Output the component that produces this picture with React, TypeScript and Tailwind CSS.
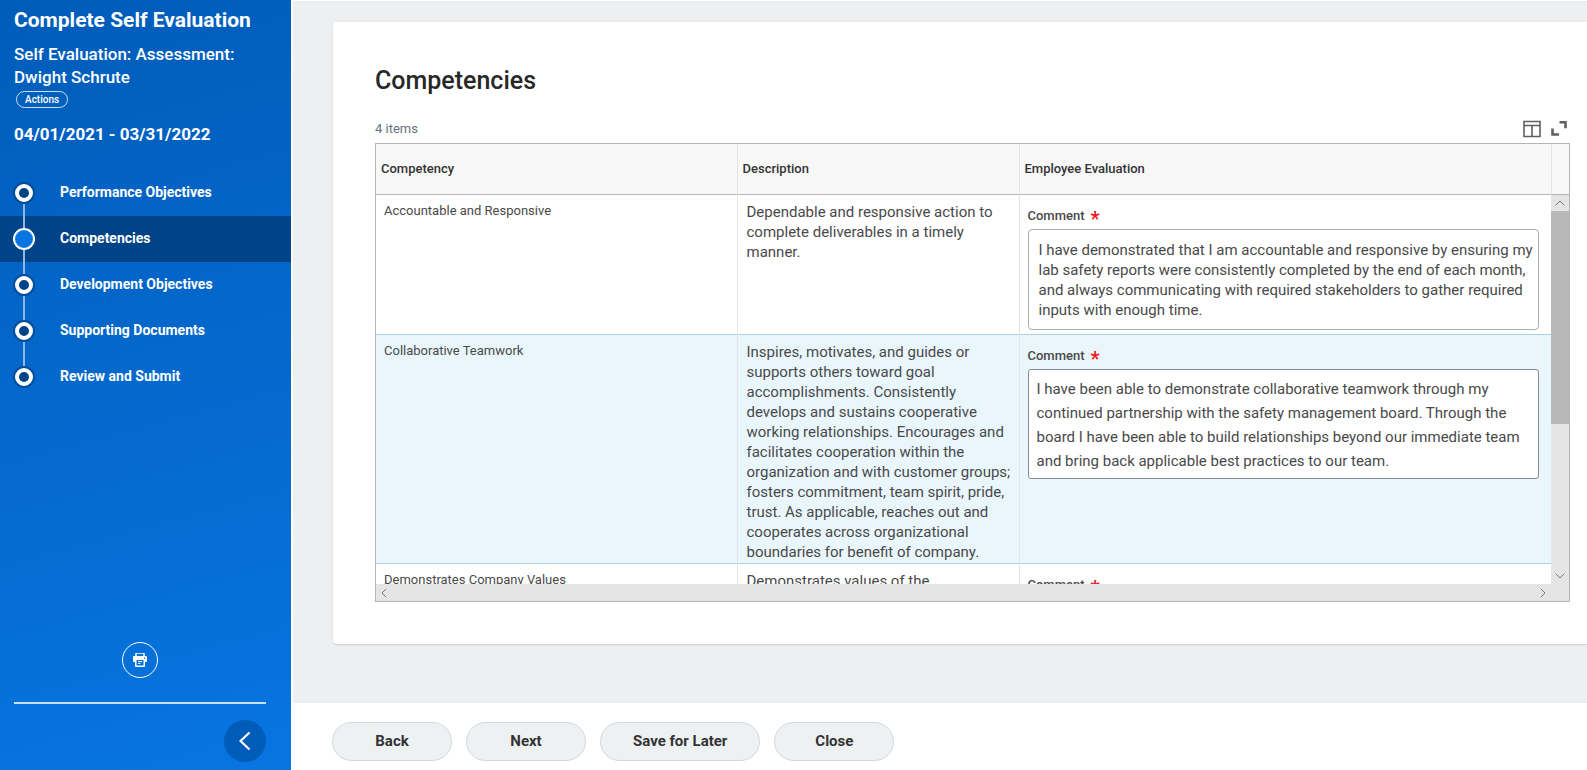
import { ChevronLeft, ChevronRight, ChevronUp, ChevronDown } from "lucide-react";

type Step = { label: string; active?: boolean };
type Row = { name: string; description: string; comment: string; active?: boolean };

const steps: Step[] = [
  { label: "Performance Objectives" },
  { label: "Competencies", active: true },
  { label: "Development Objectives" },
  { label: "Supporting Documents" },
  { label: "Review and Submit" },
];

const rows: Row[] = [
  {
    name: "Accountable and Responsive",
    description: "Dependable and responsive action to complete deliverables in a timely manner.",
    comment:
      "I have demonstrated that I am accountable and responsive by ensuring my lab safety reports were consistently completed by the end of each month, and always communicating with required stakeholders to gather required inputs with enough time.",
  },
  {
    name: "Collaborative Teamwork",
    description:
      "Inspires, motivates, and guides or supports others toward goal accomplishments. Consistently develops and sustains cooperative working relationships. Encourages and facilitates cooperation within the organization and with customer groups; fosters commitment, team spirit, pride, trust. As applicable, reaches out and cooperates across organizational boundaries for benefit of company.",
    comment:
      "I have been able to demonstrate collaborative teamwork through my continued partnership with the safety management board. Through the board I have been able to build relationships beyond our immediate team and bring back applicable best practices to our team.",
    active: true,
  },
  { name: "Demonstrates Company Values", description: "Demonstrates values of the", comment: "" },
];

function StepItem({ step, last }: { step: Step; last: boolean }) {
  return (
    <li className={step.active ? "bg-[#004387]" : ""}>
      <a
        href="#"
        aria-current={step.active ? "step" : undefined}
        className="relative flex h-[46px] items-center pl-[14px] text-sm font-bold text-white"
      >
        {!last && <span className="absolute top-[34px] left-[23px] h-6 w-[2px] bg-[#8db9e8]" />}
        <span className="flex size-5 items-center justify-center">
          {step.active ? (
            <span className="z-10 size-[22px] shrink-0 rounded-full border-2 border-white bg-[#0875e1]" />
          ) : (
            <span className="z-10 size-[18px] shrink-0 rounded-full border-4 border-white bg-[#004387] ring-2 ring-[#004387]/70" />
          )}
        </span>
        <span className="pb-[2px] pl-[26px]">{step.label}</span>
      </a>
    </li>
  );
}

function PrintIcon() {
  return (
    <svg viewBox="0 0 14 14" className="size-[14px]" aria-hidden="true">
      <path d="M3 3V1a1 1 0 0 1 1-1h6a1 1 0 0 1 1 1v2" fill="none" stroke="white" strokeWidth="1.5" />
      <path
        d="M1 3h12a1 1 0 0 1 1 1v4a1 1 0 0 1-1 1h-1v4a1 1 0 0 1-1 1H3a1 1 0 0 1-1-1V9H1a1 1 0 0 1-1-1V4a1 1 0 0 1 1-1z"
        fill="white"
      />
      <path d="M3.5 7h7v5.5h-7z" fill="#0870dc" />
      <path d="M5 8.5h4M5 10.5h2.500" stroke="white" strokeWidth="1.100" />
      <circle cx="11.500" cy="5.300" r="0.700" fill="#0870dc" />
    </svg>
  );
}

function Sidebar() {
  return (
    <aside className="flex w-[293px] shrink-0 flex-col border-r-2 border-white bg-linear-[165deg] from-[#005cb9] to-[#0875e1] text-white">
      <header className="px-[14px] pt-2">
        <h1 className="text-[21px] leading-6 font-bold">Complete Self Evaluation</h1>
        <h2 className="mt-[11px] text-[17px] leading-[23px] font-medium">
          Self Evaluation: Assessment:
          <br />
          Dwight Schrute
        </h2>
        <button className="mt-[2px] ml-[2px] flex h-[17px] items-center rounded-full border border-white/80 px-2 text-[10px] font-medium">
          Actions
        </button>
        <p className="mt-[14px] text-[17px] leading-6 font-bold">04/01/2021 - 03/31/2022</p>
      </header>
      <ol className="mt-6">
        {steps.map((s, i) => (
          <StepItem key={s.label} step={s} last={i === steps.length - 1} />
        ))}
      </ol>
      <div className="mt-auto mr-[25px] ml-[14px] pb-2">
        <div className="flex justify-center border-b-2 border-[#c9e0f8] pb-6">
          <button
            aria-label="Print"
            className="flex size-9 items-center justify-center rounded-full border border-white"
          >
            <PrintIcon />
          </button>
        </div>
        <div className="flex justify-end pt-4">
          <button
            aria-label="Collapse"
            className="flex size-[42px] items-center justify-center rounded-full bg-[#005cb9]"
          >
            <svg viewBox="0 0 12 20" className="h-5 w-3" aria-hidden="true">
              <path d="M10.500 1.500 1.500 10l9 8.500" fill="none" stroke="white" strokeWidth="2.200" />
            </svg>
          </button>
        </div>
      </div>
    </aside>
  );
}

function CompetencyRow({ row, index }: { row: Row; index: number }) {
  const id = "comment-" + index;
  return (
    <tr
      className={
        row.active
          ? "border-y border-[#a9d3e6] bg-[#e9f7fd] align-top"
          : "align-top"
      }
    >
      <td className="border-r border-[#e4e4e4] px-2 pt-[7px] text-[13px] leading-[18px]">{row.name}</td>
      <td className="border-r border-[#e4e4e4] pt-[7px] pr-2 pb-[1px] pl-[9px] text-[15px] leading-5">
        {row.description}
      </td>
      <td className="px-2 pt-3 pr-3 pb-1">
        <label htmlFor={id} className="flex h-[22px] items-start text-[13px] leading-[18px] font-medium">
          Comment
          <span className="ml-[6px] text-xl leading-6 font-bold text-[#f01820]">*</span>
        </label>
        <textarea
          id={id}
          rows={4}
          defaultValue={row.comment}
          className={
            row.active
              ? "block w-full resize-none overflow-hidden rounded-[3px] border border-[#868d95] bg-white pt-[7px] pr-0 pb-[5px] pl-2 text-[15px] leading-6"
              : "block w-full resize-none overflow-hidden rounded-[4px] border border-[#a5adb6] bg-white pt-[10px] pr-0 pb-[9px] pl-[10px] text-[15px] leading-5"
          }
        />
      </td>
    </tr>
  );
}

function CompetencyGrid() {
  return (
    <div className="border border-[#b5b5b5] text-[#494949]">
      <div className="flex h-[440px]">
        <div className="min-w-0 flex-1 overflow-hidden">
          <table className="w-full table-fixed border-collapse">
            <colgroup>
              <col className="w-[361px]" />
              <col className="w-[282px]" />
              <col />
            </colgroup>
            <thead>
              <tr className="h-[50px] border-b border-[#b5b5b5] bg-[#f8f8f8] text-left text-[13px] text-[#333333]">
                <th className="border-r border-[#e4e4e4] px-[5px] font-medium">Competency</th>
                <th className="border-r border-[#e4e4e4] px-[5px] font-medium">Description</th>
                <th className="px-[5px] font-medium">Employee Evaluation</th>
              </tr>
            </thead>
            <tbody>
              {rows.map((r, i) => (
                <CompetencyRow key={r.name} row={r} index={i} />
              ))}
            </tbody>
          </table>
        </div>
        <div className="flex w-[18px] shrink-0 flex-col">
          <div className="h-[51px] border-b border-l border-b-[#b5b5b5] border-l-[#e4e4e4] bg-[#f8f8f8]" />
          <div className="flex flex-1 flex-col items-center bg-[#e5e5e5] text-[#777777]">
            <ChevronUp className="size-4" strokeWidth={1.5} />
            <div className="h-[213px] w-full bg-[#b8b8b8]" />
            <ChevronDown className="mt-auto size-4" strokeWidth={1.5} />
          </div>
        </div>
      </div>
      <div className="flex h-[17px] items-center justify-between bg-[#e5e5e5] pr-[18px] text-[#777777]">
        <ChevronLeft className="size-4" strokeWidth={1.5} />
        <ChevronRight className="size-4" strokeWidth={1.5} />
      </div>
    </div>
  );
}

function ActionButton({ label }: { label: string }) {
  return (
    <button className="h-[39px] min-w-[120px] rounded-full border border-[#d3d8dc] bg-[#eef1f2] px-8 text-[15px] font-bold text-[#333333]">
      {label}
    </button>
  );
}

export default function App() {
  return (
    <div className="flex min-h-screen bg-[#eeeff1] font-['Roboto',sans-serif]">
      <Sidebar />
      <div className="flex min-w-0 flex-1 flex-col">
        <main className="flex-1 border-t border-white pt-[21px] pb-10 pl-10">
          <section className="rounded-l bg-white pt-[43px] pr-[17px] pb-[42px] pl-[42px] shadow-[0_1px_2px_rgba(0,0,0,0.15)]">
            <h2 className="text-[25px] leading-8 font-medium text-[#282828]">Competencies</h2>
            <div className="mt-[21px] flex h-[25px] justify-between">
              <span className="pt-[1px] text-[13px] leading-5 text-[#66737f]">4 items</span>
              <div className="flex gap-[10px] pt-[2px] pr-[3px] text-[#606060]">
                <button aria-label="Select columns" className="size-[18px]">
                  <svg viewBox="0 0 18 18" className="size-[18px]" fill="none" stroke="currentColor" aria-hidden="true">
                    <path d="M1 1.500h16v15H1zM1 5.500h16M9 5.500v11" strokeWidth="1.600" />
                  </svg>
                </button>
                <button aria-label="Full screen" className="size-[16px]">
                  <svg viewBox="0 0 16 16" className="size-[16px]" fill="none" stroke="currentColor" aria-hidden="true">
                    <path d="M8.500 2.300h6v6M1.500 8.500v6h6.500" strokeWidth="2.600" />
                  </svg>
                </button>
              </div>
            </div>
            <CompetencyGrid />
          </section>
        </main>
        <footer className="flex gap-[14px] bg-white pt-[19px] pb-[9px] pl-[39px]">
          <ActionButton label="Back" />
          <ActionButton label="Next" />
          <ActionButton label="Save for Later" />
          <ActionButton label="Close" />
        </footer>
      </div>
    </div>
  );
}
